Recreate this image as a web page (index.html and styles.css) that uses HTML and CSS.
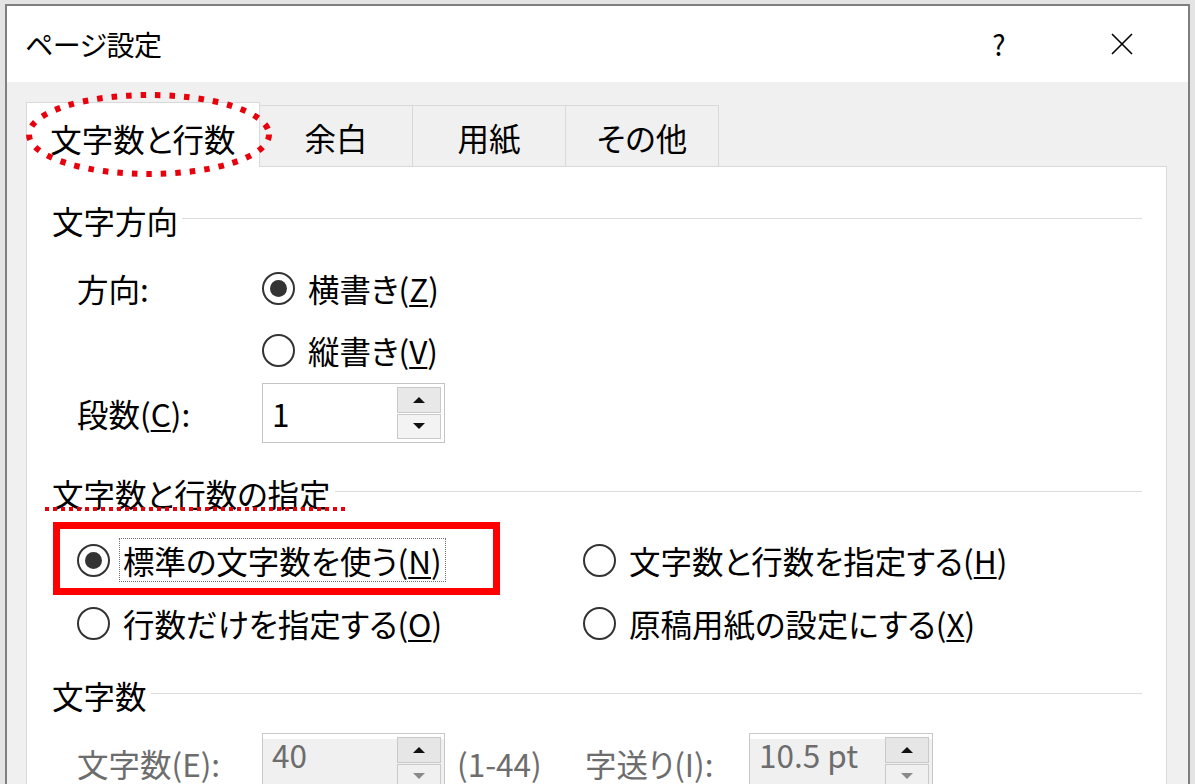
FILE: index.html
```html
<!DOCTYPE html>
<html lang="ja">
<head>
    <meta charset="utf-8">
    <title>ページ設定</title>
    <link rel="stylesheet" href="styles.css">
</head>
<body>
<div id="dialog">
    <div id="titlebar">
        <div class="title">ページ設定</div>
        <div class="help">?</div>
        <div class="close">
            <svg width="22" height="22" viewBox="0 0 22 22"><path d="M1 1L21 21M21 1L1 21" stroke="#000" stroke-width="1.6" fill="none"/></svg>
        </div>
    </div>

    <div id="tabs">
        <div class="tab active">文字数と行数</div>
        <div class="tab">余白</div>
        <div class="tab">用紙</div>
        <div class="tab">その他</div>
        <!-- red dotted ring drawn over the first tab -->
        <svg class="ring" width="248" height="86" viewBox="0 0 248 86">
            <ellipse cx="123" cy="42.5" rx="120" ry="39.5" fill="none" stroke="#e8000c" stroke-width="6" stroke-dasharray="5.5 9"/>
        </svg>
    </div>

    <div id="panel">
        <div class="group-head"><span>文字方向</span><i class="rule"></i></div>
        <div class="field dir-row">
            <div class="label">方向:</div>
            <div class="radio checked"><span class="dot"></span><span class="txt">横書き(<u>Z</u>)</span></div>
        </div>
        <div class="field dir-row2">
            <div class="label"></div>
            <div class="radio"><span class="dot"></span><span class="txt">縦書き(<u>V</u>)</span></div>
        </div>
        <div class="field spin-row">
            <div class="label">段数(<u>C</u>):</div>
            <div class="spin">
                <span class="value">1</span>
                <span class="arrows"><b class="up"></b><b class="down"></b></span>
            </div>
        </div>

        <div class="group-head second"><span class="marked">文字数と行数の指定</span><i class="rule"></i></div>
        <div class="options">
            <div class="radio checked boxed">
                <span class="redbox"></span>
                <span class="dot"></span><span class="txt focus">標準の文字数を使う(<u>N</u>)</span>
            </div>
            <div class="radio"><span class="dot"></span><span class="txt">文字数と行数を指定する(<u>H</u>)</span></div>
            <div class="radio"><span class="dot"></span><span class="txt">行数だけを指定する(<u>O</u>)</span></div>
            <div class="radio"><span class="dot"></span><span class="txt">原稿用紙の設定にする(<u>X</u>)</span></div>
        </div>

        <div class="group-head third"><span>文字数</span><i class="rule"></i></div>
        <div class="field count-row disabled">
            <div class="label">文字数(E):</div>
            <div class="spin">
                <span class="value">40</span>
                <span class="arrows"><b class="up"></b><b class="down"></b></span>
            </div>
            <span class="range">(1-44)</span>
            <div class="label pitch">字送り(I):</div>
            <div class="spin wide">
                <span class="value">10.5 pt</span>
                <span class="arrows"><b class="up"></b><b class="down"></b></span>
            </div>
        </div>
    </div>
</div>
</body>
</html>
```

FILE: styles.css
```css
* {
    padding: 0;
    margin: 0;
    box-sizing: border-box;
}

body {
    background-color: #e4e4e4;
    height: 784px;
    overflow: hidden;
    font-family: "Noto Sans CJK JP", "Noto Sans", sans-serif;
    font-feature-settings: "palt";
    font-size: 31.5px;
    color: #000;
}

#dialog {
    margin: 4px 0 0 5px;
    width: 1185px;
    height: 800px;
    border: 2px solid #7f7f7f;
    border-bottom: none;
    background-color: #f0f0f0;
}

#titlebar {
    height: 76px;
    background-color: #fff;
    display: flex;
    align-items: center;
}

.title {
    padding-left: 18px;
    flex: 1;
    font-size: 28px;
    letter-spacing: -0.5px;
}

.help {
    width: 46px;
    text-align: center;
    font-size: 28px;
}

.close {
    width: 90px;
    margin-left: 55px;
    margin-right: 21px;
    display: flex;
    justify-content: center;
}

#tabs {
    position: relative;
    display: flex;
    align-items: flex-end;
    padding: 20px 0 0 19px;
}

.tab {
    height: 61px;
    width: 154px;
    margin-left: -1px;
    border: 1px solid #d9d9d9;
    border-bottom: none;
    background-color: #f0f0f0;
    display: flex;
    justify-content: center;
    align-items: center;
    padding-top: 2px;
}

.tab.active {
    height: 65px;
    width: 234px;
    margin-left: 0;
    margin-bottom: -1px;
    background-color: #fff;
    position: relative;
    z-index: 1;
    padding-top: 5px;
}

.ring {
    position: absolute;
    left: 19px;
    top: 10px;
    z-index: 2;
}

#panel {
    margin-left: 19px;
    width: 1141px;
    height: 700px;
    border: 1px solid #d9d9d9;
    background-color: #fff;
    padding: 33px 24px 0 25px;
}

.group-head {
    display: flex;
    align-items: center;
    height: 40px;
    line-height: 40px;
}

.group-head .rule {
    flex: 1;
    height: 1px;
    background-color: #dcdcdc;
    margin: 0 0 4px 4px;
}

.group-head.second {
    margin-top: 30px;
}

.group-head.third {
    margin-top: 32px;
}

.marked {
    position: relative;
}

/* red dotted underline */
.marked::after {
    content: "";
    position: absolute;
    left: -7px;
    right: -14px;
    top: 34px;
    height: 4px;
    background-image: repeating-linear-gradient(to right, #e8000c 0 4px, transparent 4px 8px);
}

.field {
    display: flex;
    align-items: center;
    padding-left: 25px;
    height: 40px;
    line-height: 40px;
}

.field .label {
    width: 185px;
    flex-shrink: 0;
    white-space: nowrap;
}

.dir-row {
    margin-top: 28px;
}

.dir-row2 {
    margin-top: 22px;
}

.spin-row {
    margin-top: 13px;
    height: 60px;
}

.radio {
    display: flex;
    align-items: center;
    height: 40px;
    line-height: 40px;
    white-space: nowrap;
}

.dot {
    width: 33px;
    height: 33px;
    border: 2px solid #333;
    border-radius: 50%;
    background-color: #fff;
    margin-right: 13px;
    flex-shrink: 0;
    display: flex;
    justify-content: center;
    align-items: center;
}

.radio.checked .dot::after {
    content: "";
    width: 17px;
    height: 17px;
    border-radius: 50%;
    background-color: #333;
}

u {
    text-decoration-thickness: 2px;
    text-underline-offset: 3px;
}

.spin {
    width: 183px;
    height: 60px;
    border: 1px solid #c4c4c4;
    background-color: #fff;
    display: flex;
    justify-content: space-between;
    padding: 3px 3px 3px 0;
}

.spin .value {
    padding-left: 9px;
    line-height: 52px;
}

.arrows {
    width: 44px;
    display: flex;
    flex-direction: column;
}

.arrows b {
    flex: 1;
    border: 1px solid #c9c9c9;
    background-color: #f3f3f3;
    display: flex;
    justify-content: center;
    align-items: center;
}

.arrows .up {
    background-color: #e8e8e8;
    margin-bottom: 1px;
}

.arrows .up::after {
    content: "";
    border-left: 6px solid transparent;
    border-right: 6px solid transparent;
    border-bottom: 6px solid #111;
}

.arrows .down::after {
    content: "";
    border-left: 6px solid transparent;
    border-right: 6px solid transparent;
    border-top: 6px solid #111;
}

.options {
    display: grid;
    grid-template-columns: 506px 1fr;
    row-gap: 23px;
    padding-left: 25px;
    margin-top: 27px;
}

.boxed {
    position: relative;
}

.redbox {
    position: absolute;
    left: -24px;
    top: -18px;
    width: 447px;
    height: 73px;
    border: 7px solid #ff0000;
}

.txt.focus {
    margin-left: -4px;
    padding: 0 3px;
    line-height: 42px;
    border: 1px dotted #6f6f6f;
}

.count-row {
    margin-top: 18px;
    height: 60px;
    color: #6d6d6d;
}

.disabled .spin {
    background-color: #f0f0f0;
    border-color: #c8c8c8;
    box-shadow: inset 0 5px 0 #fff;
}

.disabled .spin .value {
    line-height: 34px;
}

.disabled .arrows .up {
    background-color: #e6e6e6;
}

.disabled .arrows .down {
    background-color: #f0f0f0;
}

.disabled .arrows .down::after {
    border-top-color: #8a8a8a;
}

.range {
    margin-left: 12px;
    width: 128px;
    white-space: nowrap;
}

.field .label.pitch {
    width: 164px;
}

.spin.wide {
    width: 184px;
}
```
